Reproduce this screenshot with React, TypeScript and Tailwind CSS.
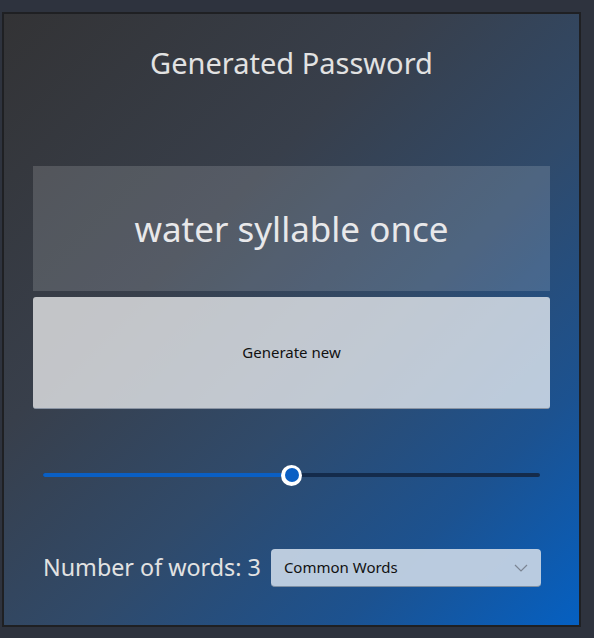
import React from "react";

export default function App() {
  return (
    <div className="w-[594px] h-[638px] bg-[#2e333e] pt-[12px] pl-[2px]" style={{ fontFamily: '"Noto Sans", "Open Sans", sans-serif' }}>
      <div className="w-[579px] h-[615px] border-2 border-[#1f2023] bg-[linear-gradient(135deg,#333335_0%,#383f4b_35%,#304a6a_58%,#1c5290_80%,#0560c2_100%)] flex flex-col px-[29px]">
        <div className="h-[100px] flex items-center justify-center pb-[4px]">
          <span className="text-[29px] text-[#e2e2e2] leading-none">Generated Password</span>
        </div>
        <div className="mt-[52px] h-[125px] bg-white/15 flex items-center justify-center">
          <span className="text-[35px] text-[#e8e8ea] leading-none">water syllable once</span>
        </div>
        <button className="mt-[6px] h-[112px] rounded-[3px] bg-white/70 border-b border-[#8a94a3] flex items-center justify-center text-[15px] text-[#111]">
          Generate new
        </button>
        <div className="mt-[54px] h-[24px] relative mx-[10px]">
          <div className="absolute left-0 right-0 top-[10px] h-[4px] bg-[#142b4b] rounded-full" />
          <div className="absolute left-0 w-[248px] top-[10px] h-[4px] bg-[#0a5fc4] rounded-l-full" />
          <div className="absolute left-[238px] top-[1.5px] w-[21px] h-[21px] rounded-full bg-white flex items-center justify-center">
            <div className="w-[14px] h-[14px] rounded-full bg-[#0a5fc4]" />
          </div>
        </div>
        <div className="mt-[62px] flex items-center pl-[10px]">
          <span className="text-[23.3px] text-[#e2e2e2] leading-none pb-[1px]">Number of words: 3</span>
          <div className="ml-[10px] w-[270px] h-[38px] rounded-[4px] bg-[#c3d2e3]/95 border-b border-[#7d8fa3] flex items-center justify-between pl-[13px] pr-[13px]">
            <span className="text-[15px] text-[#111]">Common Words</span>
            <svg width="14" height="8" viewBox="0 0 14 8" fill="none" stroke="#7b8593" strokeWidth="1.2"><path d="M1 1l6 6 6-6" /></svg>
          </div>
        </div>
      </div>
    </div>
  );
}
